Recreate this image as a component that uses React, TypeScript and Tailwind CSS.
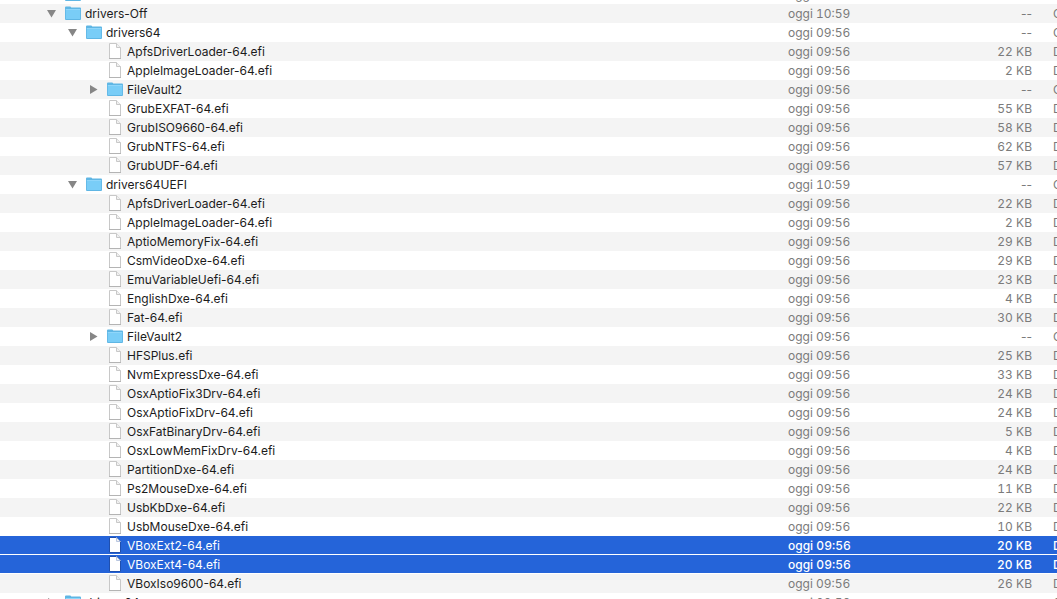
import { clsx } from "clsx";

type Entry = {
  name: string;
  level: 0 | 1 | 2;
  date: string;
  size?: string;
  open?: boolean;
  selected?: boolean;
};

// Entries without a size are folders
const entries: Entry[] = [
  { name: "doc", level: 0, date: "oggi 09:56" },
  { name: "drivers-Off", level: 0, date: "oggi 10:59", open: true },
  { name: "drivers64", level: 1, date: "oggi 09:56", open: true },
  { name: "ApfsDriverLoader-64.efi", level: 2, date: "oggi 09:56", size: "22 KB" },
  { name: "AppleImageLoader-64.efi", level: 2, date: "oggi 09:56", size: "2 KB" },
  { name: "FileVault2", level: 2, date: "oggi 09:56" },
  { name: "GrubEXFAT-64.efi", level: 2, date: "oggi 09:56", size: "55 KB" },
  { name: "GrubISO9660-64.efi", level: 2, date: "oggi 09:56", size: "58 KB" },
  { name: "GrubNTFS-64.efi", level: 2, date: "oggi 09:56", size: "62 KB" },
  { name: "GrubUDF-64.efi", level: 2, date: "oggi 09:56", size: "57 KB" },
  { name: "drivers64UEFI", level: 1, date: "oggi 10:59", open: true },
  { name: "ApfsDriverLoader-64.efi", level: 2, date: "oggi 09:56", size: "22 KB" },
  { name: "AppleImageLoader-64.efi", level: 2, date: "oggi 09:56", size: "2 KB" },
  { name: "AptioMemoryFix-64.efi", level: 2, date: "oggi 09:56", size: "29 KB" },
  { name: "CsmVideoDxe-64.efi", level: 2, date: "oggi 09:56", size: "29 KB" },
  { name: "EmuVariableUefi-64.efi", level: 2, date: "oggi 09:56", size: "23 KB" },
  { name: "EnglishDxe-64.efi", level: 2, date: "oggi 09:56", size: "4 KB" },
  { name: "Fat-64.efi", level: 2, date: "oggi 09:56", size: "30 KB" },
  { name: "FileVault2", level: 2, date: "oggi 09:56" },
  { name: "HFSPlus.efi", level: 2, date: "oggi 09:56", size: "25 KB" },
  { name: "NvmExpressDxe-64.efi", level: 2, date: "oggi 09:56", size: "33 KB" },
  { name: "OsxAptioFix3Drv-64.efi", level: 2, date: "oggi 09:56", size: "24 KB" },
  { name: "OsxAptioFixDrv-64.efi", level: 2, date: "oggi 09:56", size: "24 KB" },
  { name: "OsxFatBinaryDrv-64.efi", level: 2, date: "oggi 09:56", size: "5 KB" },
  { name: "OsxLowMemFixDrv-64.efi", level: 2, date: "oggi 09:56", size: "4 KB" },
  { name: "PartitionDxe-64.efi", level: 2, date: "oggi 09:56", size: "24 KB" },
  { name: "Ps2MouseDxe-64.efi", level: 2, date: "oggi 09:56", size: "11 KB" },
  { name: "UsbKbDxe-64.efi", level: 2, date: "oggi 09:56", size: "22 KB" },
  { name: "UsbMouseDxe-64.efi", level: 2, date: "oggi 09:56", size: "10 KB" },
  { name: "VBoxExt2-64.efi", level: 2, date: "oggi 09:56", size: "20 KB", selected: true },
  { name: "VBoxExt4-64.efi", level: 2, date: "oggi 09:56", size: "20 KB", selected: true },
  { name: "VBoxIso9600-64.efi", level: 2, date: "oggi 09:56", size: "26 KB" },
  { name: "drivers64", level: 0, date: "oggi 09:56" },
];

const INDENT = ["pl-[45px]", "pl-[66px]", "pl-[87px]"];

function FolderIcon() {
  return (
    <svg className="w-4 h-[17px] shrink-0" viewBox="0 1 16 17" aria-hidden="true">
      <path d="M0 4V3.4Q0 2.4 1 2.4H5Q5.8 2.4 6.3 3.4H15Q16 3.4 16 4.4V15Q16 16 15 16H1Q0 16 0 15Z" fill="#5fb6e4" />
      <path d="M0.8 5.6H15.2V15H0.8Z" fill="#79cdf7" />
      <path d="M0.8 5.5H15.2" stroke="#8fd6fa" />
    </svg>
  );
}

function FileIcon({ selected }: { selected?: boolean }) {
  return (
    <svg className="w-4 h-[17px] shrink-0" viewBox="0 1 16 17" aria-hidden="true">
      <path d="M2.5 1.5H9.5L13.5 5.5V16.5H2.5Z" fill="#fff" stroke={selected ? "#1f4fae" : "#c8c8c8"} />
      <path d="M9.5 1.5V5.5H13.5" fill="#f0f0f0" stroke={selected ? "#b9c6e0" : "#c8c8c8"} />
      {!selected && <path d="M2 16.5H14" stroke="#b4b4b4" />}
    </svg>
  );
}

function Disclosure({ name, open }: { name: string; open?: boolean }) {
  return (
    <button type="button" aria-label={name} aria-expanded={!!open} className="w-3 shrink-0 text-[#868686]">
      <svg className="w-3 h-[17px]" viewBox="0 1 12 17" fill="currentColor" aria-hidden="true">
        {open ? <path d="M2 6H11L6.5 13.5Z" /> : <path d="M3 5V14L10.5 9.5Z" />}
      </svg>
    </button>
  );
}

function Row({ entry, striped }: { entry: Entry; striped: boolean }) {
  const { name, level, date, size, open, selected } = entry;
  return (
    <tr
      aria-selected={!!selected}
      className={clsx(
        "[&>td]:border-b [&>td]:pt-px",
        selected
          ? "bg-[#2564d9] font-medium text-white [&>td]:border-white"
          : striped
            ? "bg-[#f4f4f4] [&>td]:border-[#f4f4f4]"
            : "bg-white [&>td]:border-white"
      )}
    >
      <td className={clsx("p-0", selected ? "text-white" : "text-[#1c1c1c]")}>
        <div className={clsx("flex items-center font-normal", INDENT[level])}>
          {size ? <span className="w-3 shrink-0" /> : <Disclosure name={name} open={open} />}
          <span className="flex ml-2 mr-1">{size ? <FileIcon selected={selected} /> : <FolderIcon />}</span>
          {name}
        </div>
      </td>
      <td className="p-0 tabular-nums">{date}</td>
      <td className={clsx("p-0 text-right", size && "tabular-nums")}>{size ?? "--"}</td>
      <td className="p-0 pl-[21px] overflow-hidden">{size ? "Documento" : "Cartella"}</td>
    </tr>
  );
}

export default function App() {
  return (
    <main className="h-screen overflow-hidden bg-white">
      {/* List is scrolled part way into its first row */}
      <table className="-mt-[15px] w-full table-fixed border-separate border-spacing-0 whitespace-nowrap font-['Inter',sans-serif] text-[12px] leading-[17px] text-[#7b7b7b]">
        <colgroup>
          <col />
          <col className="w-[164px]" />
          <col className="w-20" />
          <col className="w-[25px]" />
        </colgroup>
        <tbody>
          {entries.map((entry, i) => (
            <Row key={i} entry={entry} striped={i % 2 === 1} />
          ))}
        </tbody>
      </table>
    </main>
  );
}
